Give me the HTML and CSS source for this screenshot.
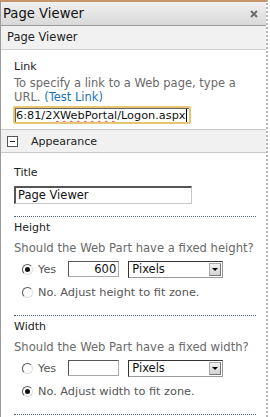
FILE: index.html
```html
<!DOCTYPE html>
<html lang="en">
<head>
    <meta charset="UTF-8">
    <title>Page Viewer</title>
    <link rel="stylesheet" href="styles.css">
</head>
<body>
    <div class="pane">
        <div class="pane-head">
            <span class="pane-title">Page Viewer</span>
            <svg class="pane-close" width="8" height="8" viewBox="0 0 8 8">
                <path d="M1 1L7 7M7 1L1 7" stroke="#6e6e6e" stroke-width="2"/>
            </svg>
        </div>
        <div class="part-title">Page Viewer</div>
        <div class="group first">
            <div class="label tight">Link</div>
            <div class="desc">To specify a link to a Web page, type a URL. <a href="#" class="test-link">(Test Link)</a></div>
            <div class="url-box"><span>6:81/2<span class="spell">XWebPortal</span>/Logon.aspx</span><span class="caret"></span></div>
        </div>
        <div class="category">
            <span class="toggle"></span>
            <span>Appearance</span>
        </div>
        <div class="group">
            <div class="label">Title</div>
            <div class="text-box wide">Page Viewer</div>
            <div class="sep"></div>

            <div class="label">Height</div>
            <div class="desc">Should the Web Part have a fixed height?</div>
            <div class="choice">
                <span class="radio on"></span><span class="opt">Yes</span>
                <div class="text-box num">600</div>
                <div class="select"><span>Pixels</span><span class="arrow"></span></div>
            </div>
            <div class="choice">
                <span class="radio"></span><span class="opt">No. Adjust height to fit zone.</span>
            </div>
            <div class="sep"></div>

            <div class="label">Width</div>
            <div class="desc">Should the Web Part have a fixed width?</div>
            <div class="choice">
                <span class="radio"></span><span class="opt">Yes</span>
                <div class="text-box num"></div>
                <div class="select"><span>Pixels</span><span class="arrow"></span></div>
            </div>
            <div class="choice">
                <span class="radio on"></span><span class="opt">No. Adjust width to fit zone.</span>
            </div>
            <div class="sep"></div>
        </div>
    </div>
</body>
</html>
```

FILE: styles.css
```css
body {
    margin: 0;
    background-color: white;
    font-family: "DejaVu Sans", Verdana, sans-serif;
    font-size: 11px;
    color: #333;
}
.pane {
    width: 265px;
    height: 415px;
    border-top: 2px solid #c8956a;
    border-right: 2px dotted #b5b5b5;
    border-left: 1px solid #9a9a9a;
}
.pane-head {
    display: flex;
    justify-content: space-between;
    align-items: center;
    height: 23px;
    padding: 0 8px 0 2px;
    background: linear-gradient(#f0f0f0, #d9d9d9);
    border-bottom: 1px solid #9a9a9a;
}
.pane-title {
    font-size: 13.2px;
    color: #111;
}
.part-title {
    height: 23px;
    line-height: 23px;
    padding-left: 6px;
    background-color: #f1f1f1;
    border-bottom: 1px solid #cfcfcf;
    font-size: 11.5px;
    color: #222;
}
.group {
    padding: 13px 10px 6px 13px;
}
.group.first {
    padding-top: 10px;
    padding-bottom: 5px;
}
.label {
    height: 14px;
    line-height: 14px;
    font-size: 11px;
    color: #222;
    margin-bottom: 6px;
}
.label.tight {
    margin-bottom: 2px;
}
.desc {
    color: #6a6a6a;
    line-height: 14px;
    font-size: 11.6px;
}
.first .desc {
    font-size: 11.5px;
}
.test-link {
    color: #1a73b8;
    text-decoration: none;
}
.url-box {
    display: flex;
    align-items: center;
    box-sizing: border-box;
    width: 178px;
    height: 18px;
    margin-top: 2px;
    margin-left: -1px;
    padding-left: 1px;
    border: 2px solid #e8c66f;
    border-radius: 2px;
    box-shadow: inset 1px 1px 0 #666;
    overflow: hidden;
    font-size: 11.3px;
    color: #111;
    white-space: nowrap;
}
.spell {
    text-decoration: underline wavy #e04040;
    text-decoration-thickness: 1px;
}
.caret {
    flex: none;
    width: 1px;
    height: 13px;
    background-color: #000;
}
.category {
    display: flex;
    align-items: center;
    gap: 13px;
    height: 22px;
    padding-left: 6px;
    background-color: #f1f1f1;
    border-top: 1px solid #c8c8c8;
    border-bottom: 1px solid #c8c8c8;
    font-size: 11px;
    color: #222;
}
.toggle {
    width: 9px;
    height: 9px;
    border: 1px solid #555;
    background: white linear-gradient(#222, #222) no-repeat center / 5px 1px;
}
.text-box {
    box-sizing: border-box;
    height: 18px;
    line-height: 15px;
    padding: 0 2px;
    border: 1px solid #c8c8c8;
    border-top: 2px solid #555;
    border-left: 2px solid #555;
    font-size: 11.5px;
    color: #111;
    background-color: white;
}
.wide {
    width: 178px;
    margin-top: 6px;
}
.num {
    width: 51px;
    height: 16px;
    line-height: 14px;
    border: 1px solid #555;
    border-right-color: #aaa;
    border-bottom-color: #aaa;
    text-align: right;
    margin: 0 9px 0 12px;
}
.sep {
    margin: 12px 0 4px 0;
    border-top: 1px dotted #4f6278;
}
.choice .radio + .opt {
    color: #555;
}
.choice {
    display: flex;
    align-items: center;
    height: 22px;
    padding-left: 8px;
}
.desc + .choice {
    margin-top: 3px;
}
.choice + .choice {
    margin-top: 1px;
}
.radio {
    box-sizing: border-box;
    width: 11px;
    height: 11px;
    border: 1px solid #555;
    border-radius: 50%;
    border-bottom-color: #ddd;
    border-right-color: #ddd;
    margin-right: 5px;
    position: relative;
}
.radio.on::after {
    content: "";
    position: absolute;
    left: 2px;
    top: 2px;
    width: 5px;
    height: 5px;
    border-radius: 50%;
    background-color: #111;
}
.opt {
    font-size: 11.3px;
}
.select {
    box-sizing: border-box;
    display: flex;
    justify-content: space-between;
    align-items: center;
    width: 95px;
    height: 17px;
    border: 1px solid #333;
    border-right-color: #999;
    border-bottom-color: #999;
    padding-left: 3px;
    font-size: 11.5px;
    color: #111;
}
.arrow {
    box-sizing: border-box;
    width: 12px;
    height: 13px;
    margin-right: 1px;
    background: linear-gradient(#f0f0f0, #d4d4d4);
    border: 1px solid #aaa;
    border-right-color: #777;
    border-bottom-color: #777;
    position: relative;
}
.arrow::after {
    content: "";
    position: absolute;
    left: 2px;
    top: 4px;
    border-left: 3px solid transparent;
    border-right: 3px solid transparent;
    border-top: 3px solid #000;
}
```
